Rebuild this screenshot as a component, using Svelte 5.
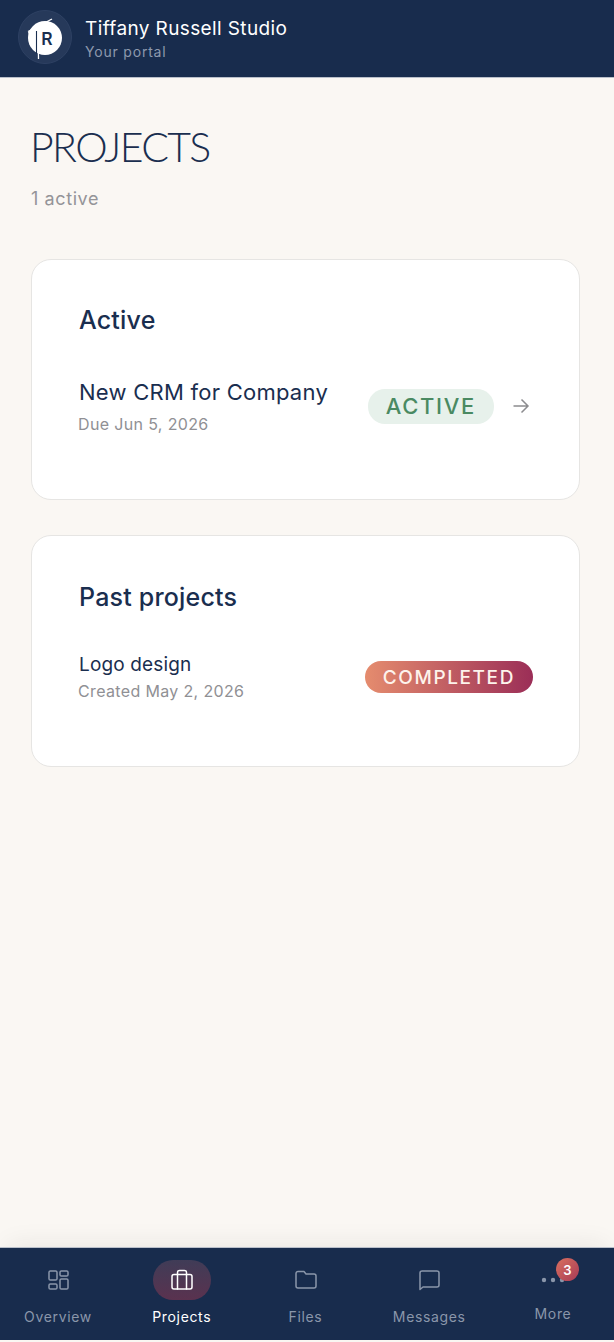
<script>
  const tabs = [
    { label: 'Overview', icon: 'grid' },
    { label: 'Projects', icon: 'case', active: true },
    { label: 'Files', icon: 'folder' },
    { label: 'Messages', icon: 'chat' },
    { label: 'More', icon: 'more', badge: 3 }
  ];
</script>

<div class="shell">
  <header class="top">
    <div class="logo">
      <svg viewBox="0 0 54 54" width="54" height="54">
        <circle cx="27" cy="27" r="26.5" fill="#26395a" stroke="#2e4163" />
        <circle cx="27" cy="28" r="17" fill="#fff" />
        <path d="M10 21.5 L34 9" stroke="#fff" stroke-width="1.4" fill="none" />
        <path d="M10 22 L22 15 L21 20 L11 25 Z" fill="#fff" />
        <path d="M20 16 L20.5 49" stroke="#fff" stroke-width="1.3" fill="none" />
        <path d="M18.5 21 L18.5 44" stroke="#1a2e4f" stroke-width="1.1" fill="none" />
        <text x="29" y="35" transform="translate(5.8 0) scale(0.8 1)" class="logo-r">R</text>
      </svg>
    </div>
    <div class="brand">
      <div class="brand-name">Tiffany Russell Studio</div>
      <div class="brand-sub">Your portal</div>
    </div>
  </header>

  <main class="page">
    <h1>PROJECTS</h1>
    <p class="count">1 active</p>

    <section class="card first">
      <h2>Active</h2>
      <div class="row">
        <div class="info">
          <div class="pname big">New CRM for Company</div>
          <div class="meta">Due Jun 5, 2026</div>
        </div>
        <span class="pill green">ACTIVE</span>
        <svg class="arrow" viewBox="0 0 18 18" width="18" height="18">
          <path d="M1.5 9 H16 M9.5 2.5 L16 9 L9.5 15.5" fill="none" stroke="#8c8c8f" stroke-width="1.5" />
        </svg>
      </div>
    </section>

    <section class="card second">
      <h2>Past projects</h2>
      <div class="row">
        <div class="info">
          <div class="pname">Logo design</div>
          <div class="meta">Created May 2, 2026</div>
        </div>
        <span class="pill done">COMPLETED</span>
      </div>
    </section>
  </main>

  <nav class="tabs">
    {#each tabs as tab}
      <div class="tab" class:on={tab.active} class:more={tab.icon === 'more'}>
        <div class="icon-wrap">
          <svg viewBox="0 0 24 24" width="24" height="24" fill="none" stroke="currentColor" stroke-width="1.5" stroke-linejoin="round" stroke-linecap="round">
            {#if tab.icon === 'grid'}
              <rect x="3" y="3" width="8" height="9" rx="1.3" />
              <rect x="14" y="3" width="8" height="5" rx="1.3" />
              <rect x="14" y="11" width="8" height="10" rx="1.3" />
              <rect x="3" y="16" width="8" height="5" rx="1.3" />
            {:else if tab.icon === 'case'}
              <rect x="2" y="6.5" width="20" height="14.5" rx="2" />
              <path d="M7.5 21 V4.5 a2 2 0 0 1 2-2 h5 a2 2 0 0 1 2 2 V21" />
            {:else if tab.icon === 'folder'}
              <path d="M4 20 h16 a2 2 0 0 0 2-2 V8 a2 2 0 0 0-2-2 h-8 L10 3.5 H4 a2 2 0 0 0-2 2 V18 a2 2 0 0 0 2 2 Z" />
            {:else if tab.icon === 'chat'}
              <path d="M3 21.5 V5 a2 2 0 0 1 2-2 h15 a2 2 0 0 1 2 2 v12 a2 2 0 0 1-2 2 H6 Z" />
            {:else}
              <circle cx="3" cy="12" r="2.2" fill="currentColor" stroke="none" />
              <circle cx="12" cy="12" r="2.2" fill="currentColor" stroke="none" />
              <circle cx="21" cy="12" r="2.2" fill="currentColor" stroke="none" />
            {/if}
          </svg>
          {#if tab.badge}<span class="badge">{tab.badge}</span>{/if}
        </div>
        <span class="tab-label">{tab.label}</span>
      </div>
    {/each}
  </nav>
</div>

<style>
  :global(body) {
    margin: 0;
    background: #f8f6f3;
  }

  .shell {
    display: flex;
    flex-direction: column;
    height: 1342px;
    overflow: hidden;
    background: #faf7f3;
    color: #1a2e4f;
    font-family: Inter, "Noto Sans", sans-serif;
  }

  .top {
    display: flex;
    align-items: center;
    gap: 13px;
    height: 77px;
    padding: 0 18px;
    flex-shrink: 0;
    background: #182c4d;
    border-bottom: 1px solid #b9bfca;
  }

  .logo {
    width: 54px;
    height: 54px;
    flex-shrink: 0;
    margin-bottom: 3px;
  }

  .logo-r {
    font: 700 19px "Liberation Sans", sans-serif;
    fill: #1a2e4f;
    text-anchor: middle;
  }

  .brand-name {
    font-size: 19px;
    line-height: 24px;
    font-weight: 400;
    letter-spacing: 0.38px;
    color: #fff;
  }

  .brand-sub {
    margin-top: 2px;
    font-size: 14px;
    line-height: 18px;
    letter-spacing: 0.8px;
    color: #8d99ad;
  }

  .page {
    flex: 1;
    padding: 46px 34px 0 31px;
  }

  h1 {
    margin: 0 0 0 -1px;
    font: 300 41px/46px Lato, sans-serif;
    letter-spacing: -1.6px;
    color: #1a2e4f;
  }

  .count {
    margin: 17px 0 0;
    font-size: 18px;
    line-height: 24px;
    letter-spacing: 0.6px;
    color: #949498;
  }

  .card {
    box-sizing: border-box;
    background: #fff;
    border: 1px solid #e6e5e3;
    border-radius: 20px;
    padding: 44px 46px 0 47px;
  }

  .first {
    height: 241px;
    margin-top: 48px;
  }

  .second {
    height: 232px;
    margin-top: 35px;
    padding-top: 45px;
  }

  h2 {
    margin: 0;
    font-size: 25px;
    line-height: 32px;
    font-weight: 500;
    letter-spacing: 0.2px;
    color: #1a2e4f;
  }

  .row {
    display: flex;
    align-items: center;
    margin-top: 41px;
  }

  .second .row {
    margin-top: 39px;
  }

  .info {
    flex: 1;
  }

  .pname {
    font-size: 19px;
    line-height: 26px;
    font-weight: 400;
    letter-spacing: 0.15px;
  }

  .big {
    font-size: 22px;
    line-height: 30px;
    letter-spacing: 0.25px;
  }

  .meta {
    margin: 6px 0 0 -1px;
    font-size: 16px;
    line-height: 22px;
    letter-spacing: 0.35px;
    color: #909094;
  }

  .second .meta {
    margin-top: 2px;
  }

  .pill {
    border-radius: 17px;
    font-weight: 500;
  }

  .green {
    padding: 6px 18px;
    font-size: 22px;
    line-height: 23px;
    letter-spacing: 1.7px;
    color: #4a8a62;
    background: #e7f1eb;
  }

  .done {
    padding: 5.5px 18px;
    font-size: 19px;
    line-height: 21px;
    letter-spacing: 1.6px;
    color: #fdf3ec;
    background: linear-gradient(90deg, #e58c6e, #9b2e57);
  }

  .arrow {
    margin: 0 3px 0 18px;
  }

  .tabs {
    display: flex;
    justify-content: space-between;
    flex-shrink: 0;
    height: 92px;
    margin-bottom: 2px;
    padding-right: 3px;
    background: #182c4d;
    border-top: 1px solid #b9bfca;
    box-shadow: 0 -10px 24px -8px rgba(40, 40, 40, 0.08);
  }

  .tab {
    width: 116px;
    display: flex;
    flex-direction: column;
    align-items: center;
    padding-top: 12px;
    color: #8a96aa;
  }

  .tab.on {
    color: #fff;
  }

  .icon-wrap {
    position: relative;
    display: flex;
    align-items: center;
    justify-content: center;
    width: 58px;
    height: 40px;
    border-radius: 20px;
  }

  .on .icon-wrap {
    background: linear-gradient(180deg, #403c57, #5a324f);
  }

  .tab-label {
    margin-top: 8px;
    font-size: 14px;
    line-height: 18px;
    letter-spacing: 0.65px;
  }

  .more .tab-label {
    margin-top: 5px;
  }

  .badge {
    position: absolute;
    top: -2px;
    right: 3px;
    width: 23px;
    height: 23px;
    border-radius: 50%;
    display: flex;
    align-items: center;
    justify-content: center;
    font-size: 13px;
    font-weight: 600;
    color: #fff;
    background: linear-gradient(135deg, #d9705f, #a83a56);
  }
</style>
